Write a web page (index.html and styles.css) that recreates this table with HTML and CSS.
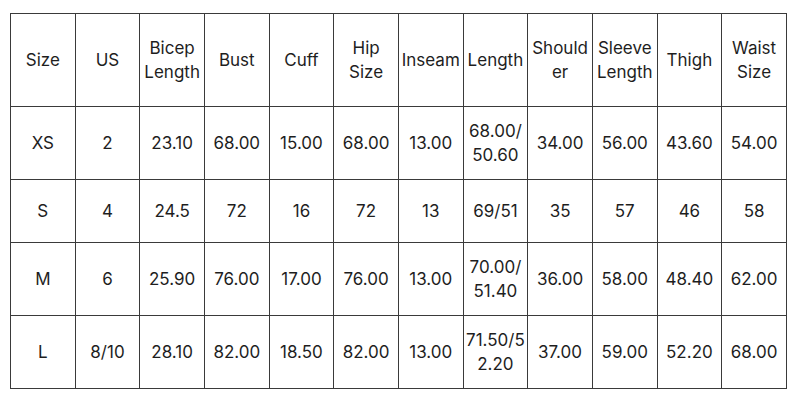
FILE: index.html
```html
<!DOCTYPE html>
<html>
<head>
<meta charset="utf-8">
<link rel="stylesheet" href="styles.css">
</head>
<body>
<table class="size-table">
  <colgroup>
    <col><col><col><col><col><col><col><col><col><col><col><col>
  </colgroup>
  <tr class="head">
    <td>Size</td><td>US</td><td>Bicep Length</td><td>Bust</td><td>Cuff</td><td>Hip Size</td><td>Inseam</td><td>Length</td><td class="brk">Shoulder</td><td>Sleeve Length</td><td>Thigh</td><td>Waist Size</td>
  </tr>
  <tr class="tall">
    <td>XS</td><td>2</td><td>23.10</td><td>68.00</td><td>15.00</td><td>68.00</td><td>13.00</td><td>68.00/ 50.60</td><td>34.00</td><td>56.00</td><td>43.60</td><td>54.00</td>
  </tr>
  <tr class="short">
    <td>S</td><td>4</td><td>24.5</td><td>72</td><td>16</td><td>72</td><td>13</td><td>69/51</td><td>35</td><td>57</td><td>46</td><td>58</td>
  </tr>
  <tr class="tall">
    <td>M</td><td>6</td><td>25.90</td><td>76.00</td><td>17.00</td><td>76.00</td><td>13.00</td><td>70.00/ 51.40</td><td>36.00</td><td>58.00</td><td>48.40</td><td>62.00</td>
  </tr>
  <tr class="tall">
    <td>L</td><td>8/10</td><td>28.10</td><td>82.00</td><td>18.50</td><td>82.00</td><td>13.00</td><td class="brk">71.50/52.20</td><td>37.00</td><td>59.00</td><td>52.20</td><td>68.00</td>
  </tr>
</table>
</body>
</html>
```
FILE: styles.css
```css
html, body {
  background: #ffffff;
}
body {
  margin: 13px 0 0 10px;
  font-family: "Inter", sans-serif;
  color: #1e1e1e;
}
.size-table {
  border-collapse: collapse;
  table-layout: fixed;
  width: 777px;
}
.size-table td {
  border: 1.5px solid #3a3a3a;
  text-align: center;
  vertical-align: middle;
  font-size: 17px;
  line-height: 24px;
  padding: 0 1px;
  overflow: hidden;
}
.head { height: 93px; }
.tall { height: 73px; }
.short { height: 63px; }
.brk { word-break: break-all; }
```
